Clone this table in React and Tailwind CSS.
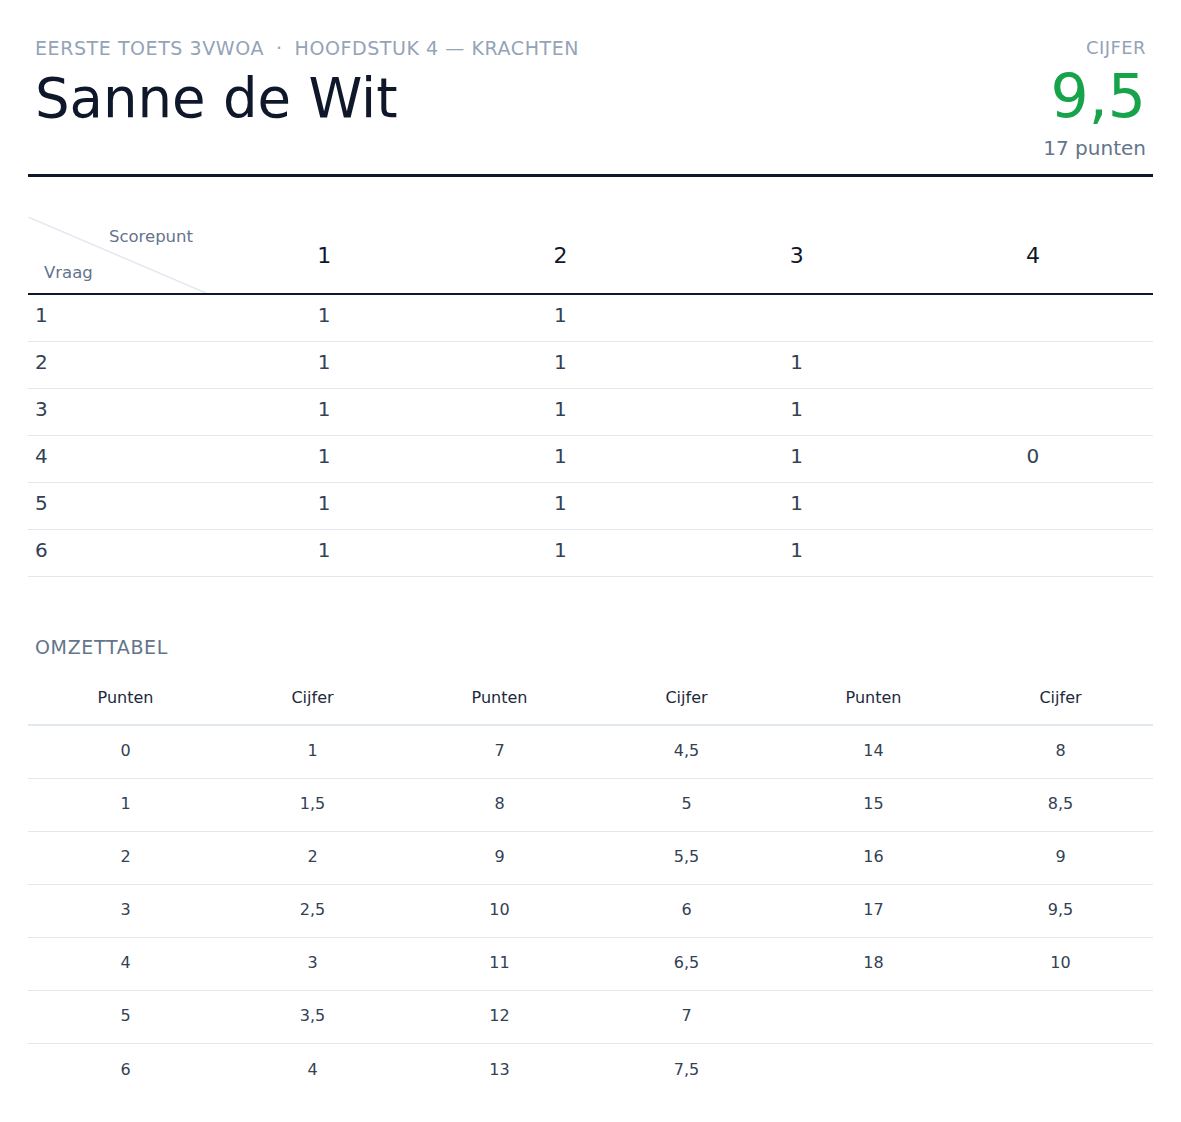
const scoreRows = [
  ["1", ["1", "1", "", ""]],
  ["2", ["1", "1", "1", ""]],
  ["3", ["1", "1", "1", ""]],
  ["4", ["1", "1", "1", "0"]],
  ["5", ["1", "1", "1", ""]],
  ["6", ["1", "1", "1", ""]],
];

const omzet = [
  ["0", "1", "7", "4,5", "14", "8"],
  ["1", "1,5", "8", "5", "15", "8,5"],
  ["2", "2", "9", "5,5", "16", "9"],
  ["3", "2,5", "10", "6", "17", "9,5"],
  ["4", "3", "11", "6,5", "18", "10"],
  ["5", "3,5", "12", "7", "", ""],
  ["6", "4", "13", "7,5", "", ""],
];

export default function App() {
  return (
    <div className="min-h-screen bg-white px-7 pt-[34px] pb-[25px] font-['DejaVu_Sans',sans-serif] text-[#0f172a]">
      <header className="flex justify-between border-b-[3px] border-[#0f172a] px-[7px] pb-[12px]">
        <div>
          <div className="text-[19px] leading-7 tracking-[0.03em] text-[#94a3b8]">
            EERSTE TOETS 3VWOA<span className="mx-3">·</span>HOOFDSTUK 4 — KRACHTEN
          </div>
          <h1 className="mt-[9px] text-[54.5px] leading-none font-normal text-[#0f172a]">Sanne de Wit</h1>
        </div>
        <div className="flex flex-col items-end">
          <div className="text-lg leading-7 tracking-wide text-[#94a3b8]">CIJFER</div>
          <div className="mt-[4px] text-6xl leading-none text-[#16a34a]">9,5</div>
          <div className="mt-[8px] text-xl leading-7 text-[#64748b]">17 punten</div>
        </div>
      </header>

      <section className="mt-10">
        <div className="grid h-[78px] grid-cols-[178px_repeat(4,1fr)] border-b-2 border-[#0f172a] pr-[2px]">
          <div className="relative flex flex-col justify-between py-2 pr-[13px] pl-4 text-[16.5px] leading-6 text-[#64748b]">
            <svg className="absolute inset-0 h-full w-full" preserveAspectRatio="none" viewBox="0 0 100 100">
              <line x1="0" y1="0" x2="100" y2="100" stroke="#e2e8f0" strokeWidth="1.5" vectorEffect="non-scaling-stroke" />
            </svg>
            <span className="relative self-end">Scorepunt</span>
            <span className="relative self-start">Vraag</span>
          </div>
          {["1", "2", "3", "4"].map((n) => (
            <div key={n} className="flex items-center justify-center text-[22px] text-[#0f172a]">
              {n}
            </div>
          ))}
        </div>
        {scoreRows.map(([q, vals]) => (
          <div
            key={q}
            className="grid h-[47px] grid-cols-[178px_repeat(4,1fr)] items-center border-b border-[#e2e8f0] pr-[2px] pb-[6px] text-xl leading-7 text-[#334155]"
          >
            <div className="pl-[7px]">{q}</div>
            {vals.map((v, i) => (
              <div key={i} className="text-center">
                {v}
              </div>
            ))}
          </div>
        ))}
      </section>

      <section className="mt-[56px]">
        <div className="px-[7px] text-[19px] leading-7 tracking-[0.035em] text-[#64748b]">OMZETTABEL</div>
        <div className="mt-[11px]">
          <div className="grid h-[54px] grid-cols-6 items-center border-b-2 border-[#e2e8f0] pr-[3px] text-base text-[#1e293b]">
            {["Punten", "Cijfer", "Punten", "Cijfer", "Punten", "Cijfer"].map((h, i) => (
              <div key={i} className="pl-2 text-center">
                {h}
              </div>
            ))}
          </div>
          {omzet.map((r, ri) => (
            <div
              key={ri}
              className={`grid h-[53px] grid-cols-6 items-center pr-[3px] pb-[2px] text-base text-[#334155] ${
                ri < omzet.length - 1 ? "border-b border-[#e2e8f0]" : ""
              }`}
            >
              {r.map((c, ci) => (
                <div key={ci} className="pl-2 text-center">
                  {c}
                </div>
              ))}
            </div>
          ))}
        </div>
      </section>
    </div>
  );
}
